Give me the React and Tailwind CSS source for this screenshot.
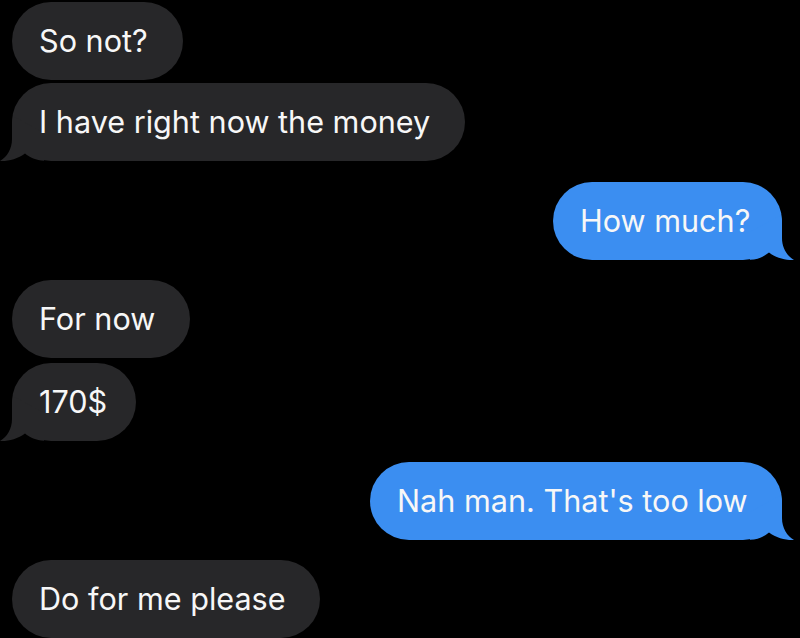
const messages = [
  { text: 'So not?', side: 'left', width: 171, mt: 'mt-[2px]' },
  { text: 'I have right now the money', side: 'left', width: 453, mt: 'mt-[3px]', tail: true },
  { text: 'How much?', side: 'right', width: 229, mt: 'mt-[21px]', tail: true },
  { text: 'For now', side: 'left', width: 178, mt: 'mt-[20px]' },
  { text: '170$', side: 'left', width: 124, mt: 'mt-[5px]', tail: true },
  { text: "Nah man. That's too low", side: 'right', width: 412, mt: 'mt-[21px]', tail: true },
  { text: 'Do for me please', side: 'left', width: 308, mt: 'mt-[20px]' },
]

function Tail({ side, color }) {
  // drawn for a left bubble, mirrored for the right one
  return (
    <svg
      width="46"
      height="80"
      viewBox="-12 0 46 80"
      className={
        side === 'left'
          ? 'absolute left-[-12px] top-0 overflow-visible'
          : 'absolute right-[-12px] top-0 overflow-visible -scale-x-100'
      }
    >
      <path
        d="M1 33 L0 39 L0 56 C0 66 -5 74 -12 78 C-5 78.6 6 76 13 70.5 C18 74.5 24 77.4 32 77.8 L32 50 Z"
        fill={color}
      />
    </svg>
  )
}

function Bubble({ msg }) {
  const isLeft = msg.side === 'left'
  const color = isLeft ? '#272729' : '#3b8ef1'
  return (
    <div className={`flex ${isLeft ? 'justify-start' : 'justify-end'} ${msg.mt}`}>
      <div
        className={`relative h-[78px] rounded-full flex items-center pl-[27px] ${
          isLeft ? 'bg-[#272729]' : 'bg-[#3b8ef1]'
        }`}
        style={{ width: msg.width }}
      >
        {msg.tail && <Tail side={msg.side} color={color} />}
        <span className="relative whitespace-nowrap text-[30.6px] leading-none text-[#f7f7f7] font-['Inter','Noto_Sans',sans-serif]">
          {msg.text}
        </span>
      </div>
    </div>
  )
}

export default function App() {
  return (
    <div className="w-[800px] h-[638px] bg-black overflow-hidden flex flex-col pl-[12px] pr-[18px]">
      {messages.map((m, i) => (
        <Bubble key={i} msg={m} />
      ))}
    </div>
  )
}
